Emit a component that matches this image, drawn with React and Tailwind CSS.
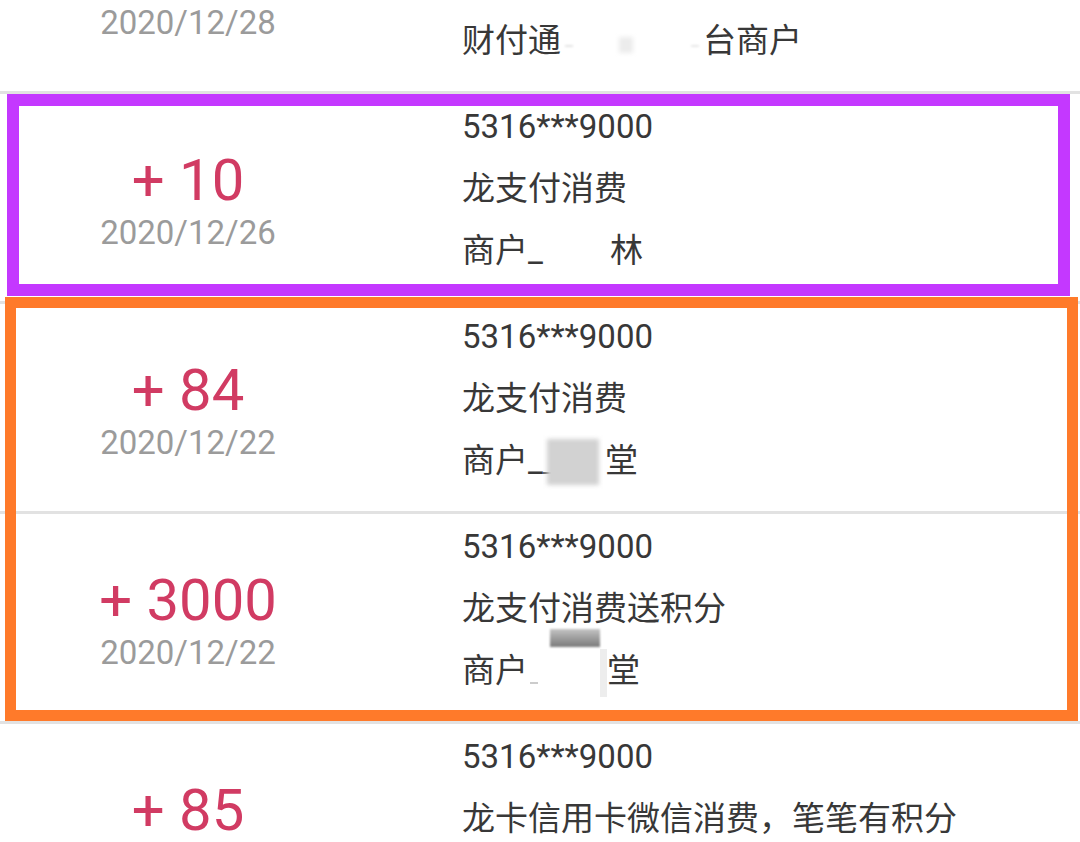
const ROWS = [
  {
    amount: '+ 10',
    date: '2020/12/28',
    card: '5316***9000',
    title: '龙支付消费',
    merchant: { before: '财付通', gap: 142, after: '台商户', blur: 'faint' },
  },
  {
    amount: '+ 10',
    date: '2020/12/26',
    card: '5316***9000',
    title: '龙支付消费',
    merchant: { before: '商户_', gap: 67, after: '林', blur: 'none' },
  },
  {
    amount: '+ 84',
    date: '2020/12/22',
    card: '5316***9000',
    title: '龙支付消费',
    merchant: { before: '商户_', gap: 62, after: '堂', blur: 'box' },
  },
  {
    amount: '+ 3000',
    date: '2020/12/22',
    card: '5316***9000',
    title: '龙支付消费送积分',
    merchant: { before: '商户', gap: 79, after: '堂', blur: 'smudge' },
  },
  {
    amount: '+ 85',
    date: '2020/12/21',
    card: '5316***9000',
    title: '龙卡信用卡微信消费，笔笔有积分',
    merchant: { before: '商户_', gap: 60, after: '店', blur: 'none' },
  },
]

const FONT = { fontFamily: 'Roboto, "Noto Sans CJK SC", sans-serif' }

function Masked({ blur, width }) {
  // the redacted part of the merchant name
  return (
    <span className="relative inline-block h-[40px] align-middle" style={{ width }}>
      {blur === 'faint' && (
        <>
          <span className="absolute left-[4px] top-[22px] w-[8px] h-[2px] bg-[#e4e4e4] blur-[1px]" />
          <span className="absolute left-[58px] top-[14px] w-[14px] h-[16px] bg-[#ececec] blur-[2px]" />
          <span className="absolute left-[130px] top-[22px] w-[8px] h-[2px] bg-[#e8e8e8] blur-[1px]" />
        </>
      )}
      {blur === 'box' && (
        <>
          <span className="absolute left-[0px] top-[29px] w-[8px] h-[2px] bg-[#666]" />
          <span className="absolute left-[4px] -top-[4px] w-[52px] h-[46px] bg-[#d2d2d2] blur-[2px]" />
        </>
      )}
      {blur === 'smudge' && (
        <>
          <span className="absolute left-[2px] top-[29px] w-[8px] h-[2px] bg-[#ccc]" />
          <span className="absolute left-[22px] -top-[24px] w-[50px] h-[18px] bg-gradient-to-b from-[#c4c4c4] to-[#7a7a7a] blur-[1px]" />
          <span className="absolute left-[72px] -top-[4px] w-[7px] h-[48px] bg-[#ededed]" />
        </>
      )}
    </span>
  )
}

function Row({ row }) {
  return (
    <div className="grid grid-cols-[376px_1fr] h-[210px] border-b-[3px] border-[#e2e2e2]">
      <div className="flex flex-col items-center pt-[56px]">
        <div className="h-[60px] text-[58px] leading-[60px] text-[#d13b63]">{row.amount}</div>
        <div className="mt-[3px] h-[40px] text-[33px] leading-[40px] text-[#9b9b9b]">{row.date}</div>
      </div>
      <div className="pl-[86px] pt-[2px] text-[33px] leading-[62px] text-[#383838] whitespace-nowrap">
        <div>{row.card}</div>
        <div>{row.title}</div>
        <div>
          {row.merchant.before}
          <Masked blur={row.merchant.blur} width={row.merchant.gap} />
          {row.merchant.after}
        </div>
      </div>
    </div>
  )
}

export default function App() {
  return (
    <div className="relative w-[1080px] h-[842px] overflow-hidden bg-white" style={FONT}>
      <div className="-mt-[116px]">
        {ROWS.map((row, i) => (
          <Row key={i} row={row} />
        ))}
      </div>

      {/* annotation frames drawn over the list */}
      <div className="absolute left-[7px] top-[94px] w-[1063px] h-[202px] border-[12px] border-[#c438ff]" />
      <div className="absolute left-[5px] top-[297px] w-[1073px] h-[424px] border-[11px] border-[#ff7a2a]" />
    </div>
  )
}
